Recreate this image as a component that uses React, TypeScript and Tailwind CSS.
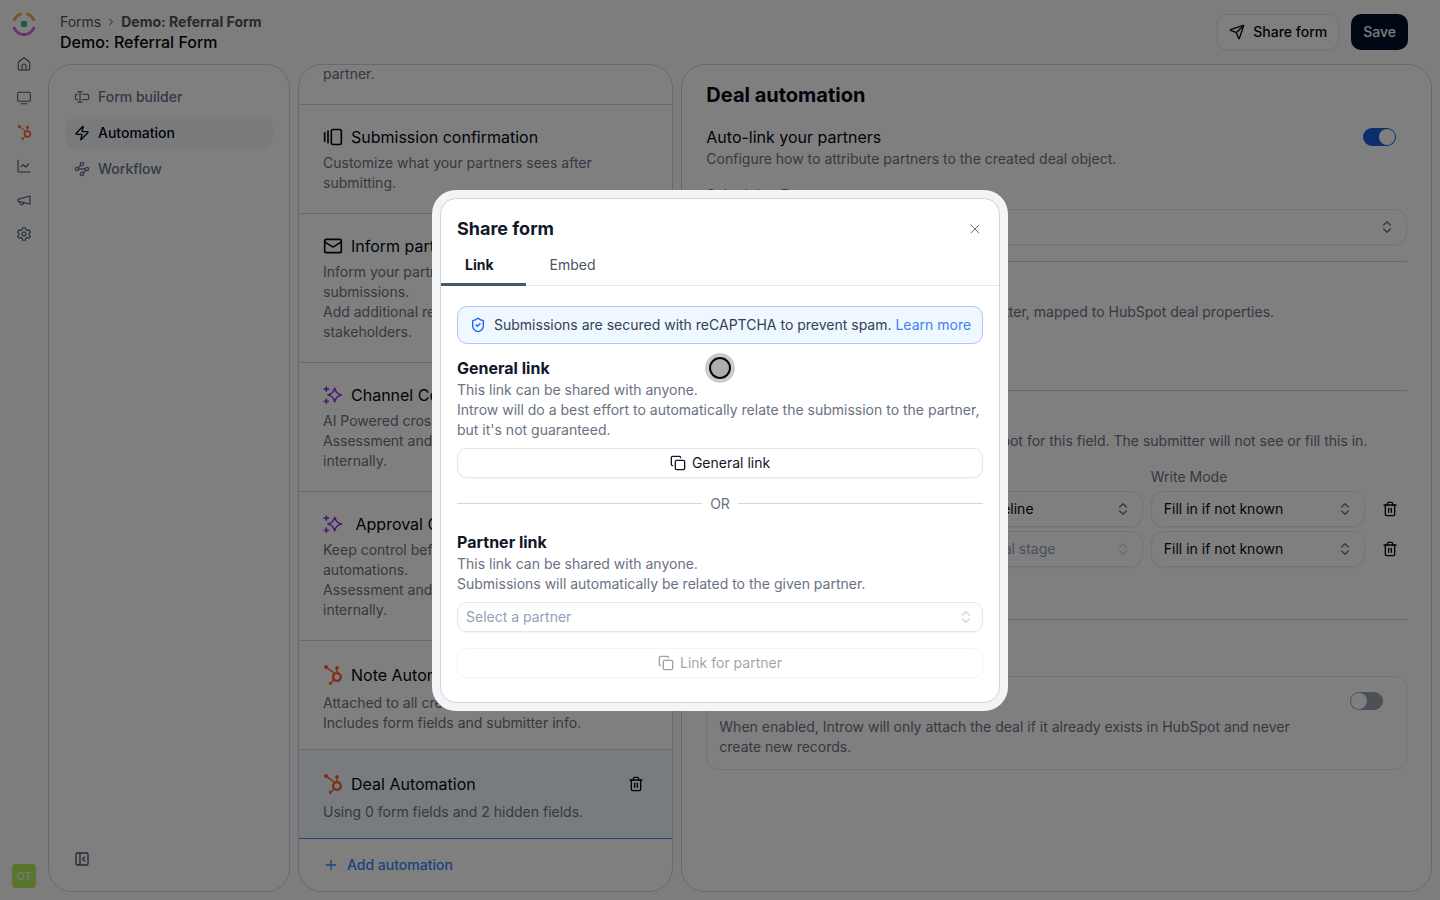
import React, { useState } from 'react';
import {
	ChevronRight,
	ChevronsUpDown,
	Copy,
	GalleryHorizontalEnd,
	Mail,
	PanelLeftClose,
	Plus,
	Send,
	ShieldCheck,
	TextCursorInput,
	Trash2,
	Waypoints,
	X,
	Zap,
} from 'lucide-react';
import { FaHubspot } from 'react-icons/fa6';

const strokeProps = {
	width: 16,
	height: 16,
	viewBox: '0 0 24 24',
	fill: 'none',
	stroke: 'currentColor',
	strokeWidth: 1.6,
	strokeLinecap: 'round' as const,
	strokeLinejoin: 'round' as const,
};

const Logo = () => (
	<svg width="24" height="24" viewBox="0 0 24 24" fill="none">
		<rect width="24" height="24" rx="6" fill="#fff" />
		<circle cx="12" cy="12" r="3.2" fill="#2fb58a" />
		<path d="M1.8 9.2A10.6 10.6 0 0 1 9.4 1.7" stroke="#f0b04a" strokeWidth="3" />
		<path d="M14.6 1.7a10.6 10.6 0 0 1 7.6 7.5" stroke="#f0b04a" strokeWidth="3" />
		<path d="M1.8 14.8a10.6 10.6 0 0 0 20.4 0" stroke="#d76ad6" strokeWidth="3" />
	</svg>
);

const HomeIcon = () => (
	<svg {...strokeProps}>
		<path d="M3.5 10.2a2 2 0 0 1 .8-1.6l6.4-5.2a2 2 0 0 1 2.6 0l6.4 5.2a2 2 0 0 1 .8 1.6V19a2 2 0 0 1-2 2h-13a2 2 0 0 1-2-2z" />
		<path d="M9 21v-6a3 3 0 0 1 6 0v6" />
	</svg>
);

const ScreenIcon = () => (
	<svg {...strokeProps}>
		<rect x="2.5" y="3.5" width="19" height="13.5" rx="2" />
		<path d="M8 20.5h8" />
	</svg>
);

const ChartIcon = () => (
	<svg {...strokeProps}>
		<path d="M3 3v16a2 2 0 0 0 2 2h16" />
		<path d="m7 13 3.5-3 4 3.500L19 9" />
	</svg>
);

const MegaphoneIcon = () => (
	<svg {...strokeProps}>
		<path d="m3 11 18-5v12L3 14z" />
		<path d="M11.6 16.8a3 3 0 1 1-5.8-1.6" />
	</svg>
);

const GearIcon = () => (
	<svg {...strokeProps}>
		<path d="M10 2.5h4l.7 3.1 1.9 1.1 3-.9 2 3.4-2.3 2.2v1.2l2.3 2.2-2 3.4-3-.9-1.9 1.1-.7 3.1h-4l-.7-3.1-1.9-1.1-3 .9-2-3.4 2.300-2.200v-1.200L2.400 9.200l2-3.400 3 .9 1.900-1.100z" />
		<circle cx="12" cy="12" r="3" />
	</svg>
);

const SparkleIcon = () => (
	<svg {...strokeProps} width={20} height={20} strokeWidth={2} className="text-[#9333ea]">
		<path d="M14 4c1.300 5 3 6.700 8 8-5 1.300-6.700 3-8 8-1.300-5-3-6.700-8-8 5-1.300 6.700-3 8-8z" />
		<path d="M4 2.500v5M1.500 5h5M4 17v5M1.500 19.500h5" />
	</svg>
);

const HubspotIcon = () => <FaHubspot size={20} className="text-[#ff5c35]" />;

const railItems = [
	{ name: 'Home', icon: <HomeIcon /> },
	{ name: 'Portal', icon: <ScreenIcon /> },
	{ name: 'HubSpot', icon: <FaHubspot size={15} className="text-[#ff5c35]" /> },
	{ name: 'Analytics', icon: <ChartIcon /> },
	{ name: 'Announcements', icon: <MegaphoneIcon /> },
	{ name: 'Settings', icon: <GearIcon /> },
];

const navItems = [
	{ name: 'Form builder', icon: TextCursorInput },
	{ name: 'Automation', icon: Zap, active: true },
	{ name: 'Workflow', icon: Waypoints },
];

const steps = [
	{
		title: 'Submission confirmation',
		icon: <GalleryHorizontalEnd size={20} />,
		lines: ['Customize what your partners sees after submitting.'],
	},
	{
		title: 'Inform partners',
		icon: <Mail size={20} />,
		lines: ['Inform your partners about updates on their submissions.', 'Add additional recipients to inform internal stakeholders.'],
	},
	{
		title: 'Channel Conflict',
		icon: <SparkleIcon />,
		lines: ['AI Powered cross-check of submissions.', 'Assessment and outcome are only visible internally.'],
	},
	{
		title: '\u00a0Approval Gate',
		icon: <SparkleIcon />,
		lines: ['Keep control before running any of the next automations.', 'Assessment and outcome are only visible internally.'],
	},
];

const SelectBox = (props: { label: string; value: string; muted?: boolean; compact?: boolean }) => {
	const { label, value, muted, compact } = props;
	return (
		<div className="relative w-full">
			<select
				aria-label={label}
				className={`w-full appearance-none border border-gray-200 bg-white text-sm shadow-xs ${
					compact ? 'h-[30px] rounded-[10px] px-2' : 'h-9 rounded-xl px-3'
				} ${muted ? 'text-slate-400' : 'text-gray-950'}`}
			>
				<option>{value}</option>
			</select>
			<ChevronsUpDown
				size={16}
				className={`pointer-events-none absolute top-1/2 -translate-y-1/2 ${compact ? 'right-[9px]' : 'right-3'} ${
					muted ? 'text-gray-300' : 'text-gray-500'
				}`}
			/>
		</div>
	);
};

const Toggle = (props: { label: string; defaultChecked?: boolean }) => {
	const [checked, setChecked] = useState(!!props.defaultChecked);
	return (
		<label className={`mr-[11px] flex h-[18px] w-[33px] shrink-0 cursor-pointer items-center rounded-full p-px ${checked ? 'justify-end bg-[#1d5bd8]' : 'bg-gray-400'}`}>
			<input type="checkbox" role="switch" aria-label={props.label} className="sr-only" checked={checked} onChange={() => setChecked(!checked)} />
			<span className="size-4 rounded-full bg-white" />
		</label>
	);
};

const Rail = () => (
	<aside className="flex w-12 shrink-0 flex-col items-center pt-3 pb-3">
		<Logo />
		<nav className="mt-[18px] flex flex-col gap-[14px] text-slate-600">
			{railItems.map((item) => (
				<a key={item.name} href="#" aria-label={item.name} className="flex h-5 w-5 items-center justify-center">
					{item.icon}
				</a>
			))}
		</nav>
		<div className="mt-auto flex size-6 items-center justify-center rounded-sm bg-[#b5ec5b] text-[11px] text-gray-100">OT</div>
	</aside>
);

const Header = () => (
	<header className="flex h-16 shrink-0 items-center justify-between pr-8 pl-3">
		<div>
			<div className="flex h-5 items-center gap-1 text-sm text-neutral-600">
				<a href="#">Forms</a>
				<ChevronRight size={12} />
				<span className="font-bold">Demo: Referral Form</span>
			</div>
			<h1 className="text-base leading-5 font-medium text-gray-950">Demo: Referral Form</h1>
		</div>
		<div className="flex gap-3">
			<button className="flex h-9 items-center gap-2 rounded-[10px] border border-gray-200 bg-white px-[11px] text-sm font-medium text-gray-950 shadow-xs">
				<Send size={16} />
				Share form
			</button>
			<button className="h-9 rounded-[10px] bg-[#020f24] px-3 text-sm font-medium text-gray-50">Save</button>
		</div>
	</header>
);

const SideNav = () => (
	<div className="flex flex-col justify-between rounded-3xl border border-slate-300 bg-white p-4">
		<nav className="flex flex-col gap-1">
			{navItems.map((item) => (
				<a
					key={item.name}
					href="#"
					className={`flex h-8 items-center gap-2 rounded-[10px] px-[9px] text-sm font-medium ${item.active ? 'bg-slate-100 text-slate-950' : 'text-slate-500'}`}
				>
					<item.icon size={16} />
					{item.name}
				</a>
			))}
		</nav>
		<button aria-label="Collapse menu" className="flex h-8 items-center px-[9px] text-slate-600">
			<PanelLeftClose size={16} />
		</button>
	</div>
);

const StepList = () => (
	<div className="flex min-h-0 min-w-0 flex-col overflow-hidden rounded-3xl border border-slate-300 bg-white">
		<div className="flex min-h-0 flex-1 flex-col justify-end text-sm text-gray-500">
			<p className="px-6 pb-5">partner.</p>
			{steps.map((step) => (
				<section key={step.title} className="border-t border-gray-300 px-6 py-5">
					<h2 className="mb-1 flex items-center gap-2 text-base text-gray-950">
						{step.icon}
						{step.title}
					</h2>
					{step.lines.map((line) => (
						<p key={line}>{line}</p>
					))}
				</section>
			))}
			<section className="border-t border-gray-300 px-6 pt-5 pb-4">
				<h2 className="mb-1 flex h-7 items-center gap-2 text-base text-gray-950">
					<HubspotIcon />
					Note Automation
				</h2>
				<p>Attached to all created objects.</p>
				<p>Includes form fields and submitter info.</p>
			</section>
			<section className="border-t border-b border-t-gray-300 border-b-[#3b82f6] bg-sky-50 px-6 pt-5 pb-4">
				<h2 className="mb-1 flex h-7 items-center gap-2 text-base text-gray-950">
					<HubspotIcon />
					Deal Automation
					<button aria-label="Delete automation" className="mr-1 ml-auto">
						<Trash2 size={16} />
					</button>
				</h2>
				<p>Using 0 form fields and 2 hidden fields.</p>
			</section>
		</div>
		<button className="flex h-[52px] shrink-0 items-center gap-2 px-6 text-sm font-medium text-[#3b82f6]">
			<Plus size={16} />
			Add automation
		</button>
	</div>
);

const DealPanel = () => (
	<main className="min-w-0 rounded-3xl border border-slate-300 bg-white px-6 py-4 text-sm text-gray-500">
		<h2 className="mb-4 text-xl font-bold text-gray-950">Deal automation</h2>
		<div className="flex items-start justify-between">
			<div>
				<h3 className="text-base text-gray-950">Auto-link your partners</h3>
				<p>Configure how to attribute partners to the created deal object.</p>
			</div>
			<div className="flex h-6 items-center">
				<Toggle label="Auto-link your partners" defaultChecked />
			</div>
		</div>
		<p className="mt-4 mb-1">Submitting Partner</p>
		<SelectBox label="Submitting Partner" value="Partner" />
		<hr className="my-4 border-gray-300" />
		<h3 className="text-base text-gray-950">Form fields</h3>
		<p>The fields which can be filled in by the submitter, mapped to HubSpot deal properties.</p>
		<button className="mt-4 flex h-9 items-center gap-2 font-medium text-[#3b82f6]">
			<Plus size={16} />
			Add form field
		</button>
		<hr className="my-4 border-gray-300" />
		<h3 className="text-base text-gray-950">Hidden fields</h3>
		<p>Choose a default value that is saved in HubSpot for this field. The submitter will not see or fill this in.</p>
		<div className="mt-4 grid grid-cols-[1fr_1fr_1fr_34px] gap-x-2 gap-y-1">
			<span>Property</span>
			<span>Value</span>
			<span>Write Mode</span>
			<span />
			<SelectBox label="Property 1" value="Pipeline" />
			<SelectBox label="Value 1" value="Sales Pipeline" />
			<SelectBox label="Write mode 1" value="Fill in if not known" />
			<button aria-label="Delete pipeline" className="flex items-center justify-center text-gray-950">
				<Trash2 size={16} />
			</button>
			<SelectBox label="Property 2" value="Deal Stage" />
			<SelectBox label="Value 2" value="Select deal stage" muted />
			<SelectBox label="Write mode 2" value="Fill in if not known" />
			<button aria-label="Delete deal stage" className="flex items-center justify-center text-gray-950">
				<Trash2 size={16} />
			</button>
		</div>
		<button className="mt-4 flex items-center gap-2 font-medium text-[#3b82f6]">
			<Plus size={16} />
			Add hidden field
		</button>
		<hr className="my-4 border-gray-300" />
		<h3 className="text-base text-gray-950">Advanced</h3>
		<div className="mt-4 flex items-start gap-6 rounded-xl border border-gray-200 p-3">
			<div className="flex-1">
				<h4 className="mb-1 text-base text-gray-950">Only attach existing deals</h4>
				<p>When enabled, Introw will only attach the deal if it already exists in HubSpot and never create new records.</p>
			</div>
			<div className="flex h-6 items-center">
				<Toggle label="Only attach existing deals" />
			</div>
		</div>
	</main>
);

const ShareDialog = () => (
	<div className="fixed inset-0 flex items-center justify-center bg-black/50">
		<div role="dialog" aria-modal="true" aria-labelledby="share-title" className="w-full max-w-xl rounded-3xl bg-gray-100 p-2">
			<div className="rounded-2xl border border-slate-300 bg-white text-sm text-gray-500">
				<div className="flex items-center justify-between px-4 pt-4">
					<h2 id="share-title" className="text-lg leading-7 font-bold text-gray-900">
						Share form
					</h2>
					<button aria-label="Close">
						<X size={16} strokeWidth={1.5} />
					</button>
				</div>
				<div role="tablist" className="flex border-b border-gray-200">
					<button role="tab" aria-selected="true" className="-mb-px border-b-3 border-gray-600 pt-3 pr-8 pb-2 pl-6 font-bold text-gray-900">
						Link
					</button>
					<button role="tab" aria-selected="false" className="-mb-px border-b-3 border-transparent pt-3 pr-8 pb-2 pl-6 text-gray-600">
						Embed
					</button>
				</div>
				<div className="px-4 pt-5 pb-6">
					<div className="flex items-center gap-2 rounded-[10px] border border-[#a9c7fb] bg-[#eff7ff] px-3 py-2 text-slate-700">
						<ShieldCheck size={16} className="shrink-0 text-blue-600" />
						<p className="sm:whitespace-nowrap">
							Submissions are secured with reCAPTCHA to prevent spam.{' '}
							<a href="#" className="text-[#3b82f6]">
								Learn more
							</a>
						</p>
					</div>
					<h3 className="mt-3 text-base font-bold text-gray-900">General link</h3>
					<p>
						This link can be shared with anyone.
						<br />
						Introw will do a best effort to automatically relate the submission to the partner, but it&apos;s not guaranteed.
					</p>
					<button className="mt-2 flex h-[30px] w-full items-center justify-center gap-[6px] rounded-[10px] border border-gray-200 text-gray-900 shadow-xs">
						<Copy size={16} />
						General link
					</button>
					<div className="my-4 flex items-center gap-2">
						<span className="h-px flex-1 bg-gray-300" />
						OR
						<span className="h-px flex-1 bg-gray-300" />
					</div>
					<h3 className="text-base font-bold text-gray-900">Partner link</h3>
					<p>
						This link can be shared with anyone.
						<br />
						Submissions will automatically be related to the given partner.
					</p>
					<div className="mt-2">
						<SelectBox label="Partner" value="Select a partner" muted compact />
					</div>
					<button
						disabled
						className="mt-4 flex h-[30px] w-full items-center justify-center gap-[6px] rounded-[10px] border border-gray-200 text-gray-900 opacity-40 shadow-xs"
					>
						<Copy size={16} />
						Link for partner
					</button>
				</div>
			</div>
		</div>
		{/* touch pointer */}
		<div className="pointer-events-none absolute top-[353px] left-1/2 flex size-[30px] -translate-x-1/2 items-center justify-center rounded-full bg-black/20">
			<span className="size-[22px] rounded-full border-2 border-gray-950 bg-black/15" />
		</div>
	</div>
);

const App = () => (
	<div className="flex h-screen overflow-hidden bg-[#fafafa] font-['Inter',sans-serif]">
		<Rail />
		<div className="flex min-w-0 flex-1 flex-col">
			<Header />
			<div className="grid min-h-0 flex-1 grid-cols-[242px_1fr_2fr] grid-rows-[minmax(0,1fr)] gap-2 pr-2 pb-2">
				<SideNav />
				<StepList />
				<DealPanel />
			</div>
		</div>
		<ShareDialog />
	</div>
);

export default App;
